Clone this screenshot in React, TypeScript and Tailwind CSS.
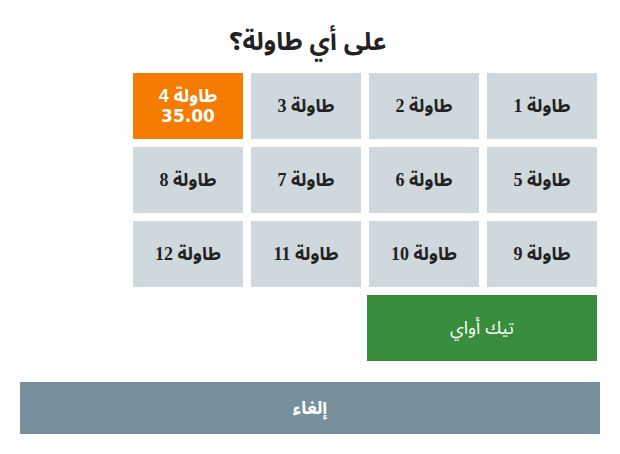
import React from 'react';

const tables = Array.from({ length: 12 }, (_, i) => i + 1);
const selected = 4;

export default function App() {
  return (
    <div dir="rtl" className="w-[620px] h-[454px] bg-white px-[20px] pt-[24px] font-['Liberation_Sans','Noto_Sans_Arabic',sans-serif]">
      <h1 className="text-center text-[25px] leading-[34px] font-bold text-[#222] pr-[4px]">على أي طاولة؟</h1>

      <div className="mt-[15px] pr-[3px] grid grid-cols-[repeat(4,110px)] auto-rows-[66px] gap-[8px]">
        {tables.map((n) =>
          n === selected ? (
            <button
              key={n}
              className="bg-[#f57c00] text-white font-bold text-[18px] leading-[20px] flex flex-col items-center justify-center"
            >
              <span>طاولة {n}</span>
              <span className="font-['DejaVu_Sans',sans-serif] text-[17px]">35.00</span>
            </button>
          ) : (
            <button
              key={n}
              className="bg-[#cfd8dc] text-[#222] font-bold text-[18px] flex items-center justify-center font-['Liberation_Serif','Noto_Sans_Arabic',serif]"
            >
              طاولة {n}
            </button>
          )
        )}
        <button className="col-span-2 -ml-[2px] bg-[#388e3c] text-white text-[18px] flex items-center justify-center">
          تيك أواي
        </button>
      </div>

      <button className="mt-[21px] w-full h-[52px] bg-[#78909c] text-white font-bold text-[18px] flex items-center justify-center">
        إلغاء
      </button>
    </div>
  );
}
